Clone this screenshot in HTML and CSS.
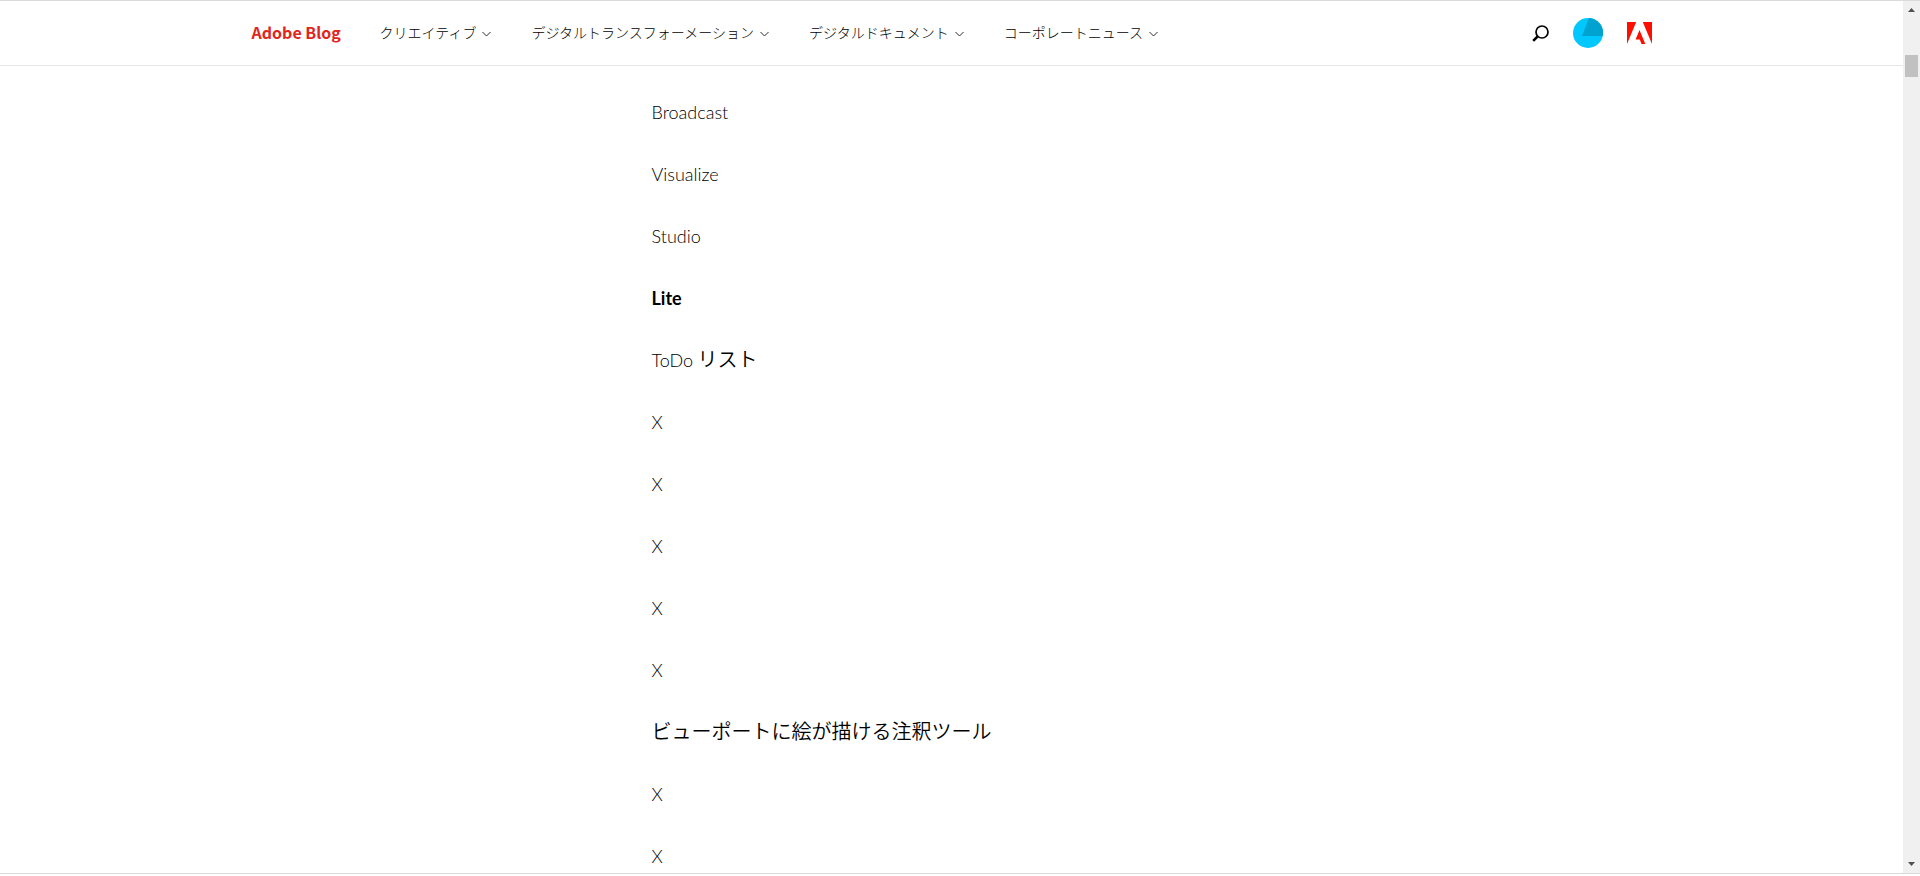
FILE: index.html
```
<!DOCTYPE html>
<html lang="ja">
<head>
    <meta charset="UTF-8">
    <meta name="viewport" content="width=device-width, initial-scale=1.0">
    <title>Adobe Blog</title>
    <link rel="stylesheet" href="styles.css">
</head>
<body>
    <div class="page">
        <div class="content">
            <header class="header">
                <nav class="nav">
                    <a class="brand" href="#">Adobe Blog</a>
                    <button class="nav-item" type="button">クリエイティブ<svg class="chevron" viewBox="0 0 9 6"><path d="M.5 1l4 4 4-4"/></svg></button>
                    <button class="nav-item" type="button">デジタルトランスフォーメーション<svg class="chevron" viewBox="0 0 9 6"><path d="M.5 1l4 4 4-4"/></svg></button>
                    <button class="nav-item" type="button">デジタルドキュメント<svg class="chevron" viewBox="0 0 9 6"><path d="M.5 1l4 4 4-4"/></svg></button>
                    <button class="nav-item" type="button">コーポレートニュース<svg class="chevron" viewBox="0 0 9 6"><path d="M.5 1l4 4 4-4"/></svg></button>
                    <div class="tools">
                        <button class="icon-button" type="button" aria-label="検索">
                            <svg width="17" height="17" viewBox="0 0 17 17" fill="none" stroke="#000"><circle cx="10" cy="7" r="6" stroke-width="1.7"/><path d="M5.7 11.3L1.2 15.8" stroke-width="2.6"/></svg>
                        </button>
                        <button class="icon-button" type="button" aria-label="プロフィール">
                            <svg width="30" height="30" viewBox="0 0 30 30"><circle cx="15" cy="15" r="15" fill="#00c8ff"/><path d="M16 0a15 15 0 0 1 14 18H9z" fill="#00a2cf"/></svg>
                        </button>
                        <a class="icon-button" href="#" aria-label="Adobe">
                            <svg width="25" height="22" viewBox="0 0 25 22" fill="#fa0f00"><path d="M0 0h9.2L0 22zM15.8 0H25v22zM12.5 8.1L18.3 22h-3.8l-1.7-4.4H8.6z"/></svg>
                        </a>
                    </div>
                </nav>
            </header>
            <main class="article">
                <p><span class="latin">Broadcast</span></p>
                <p><span class="latin">Visualize</span></p>
                <p><span class="latin">Studio</span></p>
                <p><strong class="latin">Lite</strong></p>
                <p><span class="latin">ToDo</span> リスト</p>
                <p><span class="latin">X</span></p>
                <p><span class="latin">X</span></p>
                <p><span class="latin">X</span></p>
                <p><span class="latin">X</span></p>
                <p><span class="latin">X</span></p>
                <p>ビューポートに絵が描ける注釈ツール</p>
                <p><span class="latin">X</span></p>
                <p><span class="latin">X</span></p>
            </main>
        </div>
        <div class="scrollbar">
            <svg class="arrow" viewBox="0 0 7 4"><path d="M0 4L3.5 0L7 4z"/></svg>
            <div class="thumb"></div>
            <svg class="arrow" viewBox="0 0 7 4"><path d="M0 0L3.5 4L7 0z"/></svg>
        </div>
    </div>
</body>
</html>
```
FILE: styles.css
```
* {
    box-sizing: border-box;
}
body {
    margin: 0;
    padding-bottom: 2px;
    min-height: 100vh;
    display: flex;
    background: #fff;
    color: #000;
    font-family: "Noto Sans CJK JP", sans-serif;
}
.page {
    display: flex;
    flex: 1;
    border-top: 1px solid #dadada;
    border-bottom: 1px solid #dadada;
}
.content {
    flex: 1;
}
.header {
    border-bottom: 1px solid #e6e6e6;
}
.nav {
    display: flex;
    align-items: center;
    gap: 40px;
    max-width: 1400px;
    height: 64px;
    margin: 0 auto;
}
.brand {
    width: 88px;
    padding-bottom: 2px;
    color: #e1251b;
    font-size: 16px;
    font-weight: 700;
    text-decoration: none;
    white-space: nowrap;
}
.nav-item {
    display: flex;
    align-items: center;
    gap: 6px;
    padding: 0 0 2px;
    border: none;
    background: none;
    color: #000;
    font-family: inherit;
    font-size: 14px;
    font-weight: 300;
    white-space: nowrap;
    cursor: pointer;
}
.chevron {
    width: 9px;
    height: 6px;
    margin-top: 4px;
    fill: none;
    stroke: #2c2c2c;
}
.tools {
    display: flex;
    align-items: center;
    gap: 24px;
    margin-left: auto;
}
.icon-button {
    display: flex;
    padding: 0;
    border: none;
    background: none;
    cursor: pointer;
}
.article {
    max-width: 600px;
    margin: 0 auto;
    padding-top: 30px;
    font-size: 20px;
    font-weight: 350;
    line-height: 30px;
}
.article p {
    margin: 0 0 32px;
}
.article p:last-child {
    margin-bottom: 0;
}
.latin {
    font-family: Lato, sans-serif;
    font-size: 18px;
    font-weight: 300;
    line-height: 20px;
}
strong.latin {
    font-weight: 700;
}
.scrollbar {
    display: flex;
    flex-direction: column;
    align-items: center;
    width: 17px;
    padding: 7px 0;
    background: #f0f0f0;
}
.arrow {
    width: 7px;
    height: 4px;
    fill: #505050;
}
.thumb {
    width: 13px;
    height: 22px;
    margin: 43px 0 auto;
    background: #c1c1c1;
}
```
